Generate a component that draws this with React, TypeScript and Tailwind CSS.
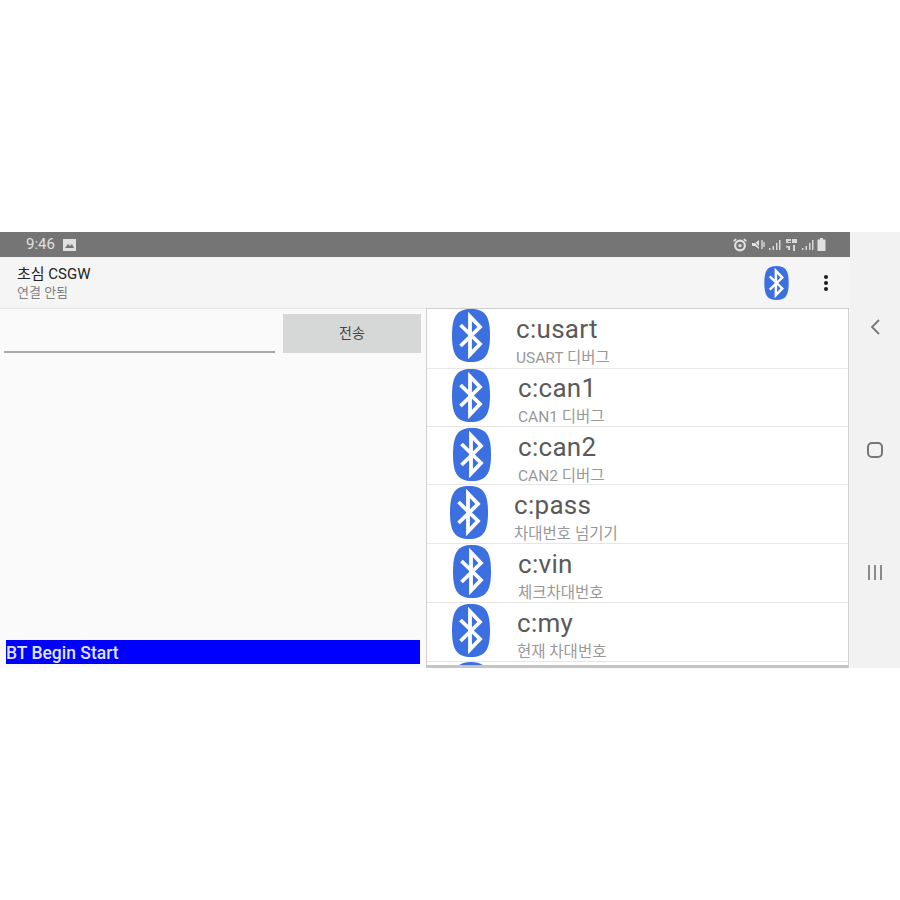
import React from 'react';

const sans = '"Roboto", "Noto Sans CJK KR", sans-serif';

const BtIcon = ({ className }: { className: string }) => (
  <svg viewBox="0 0 38 53" className={className}>
    <path d="M19 0C33 0 38 7 38 26.500C38 46 33 53 19 53C5 53 0 46 0 26.500C0 7 5 0 19 0Z" fill="#3c6fe0" />
    <path
      d="M8.500 16L28 35L18 45.500V7.500L28 18L8.500 37"
      fill="none"
      stroke="#fff"
      strokeWidth="3.800"
      strokeLinejoin="miter"
    />
  </svg>
);

const Signal = () => (
  <svg viewBox="0 0 13 12" className="w-[13px] h-[12px]">
    <path d="M1 9h1.500v2H1zM4.500 7H6v4H4.500zM8 4h1.500v7H8zM11 1h1.500v10H11z" fill="#d8d8d8" />
  </svg>
);

const StatusIcons = () => (
  <div className="flex items-center gap-[3px]">
    <svg viewBox="0 0 14 13" className="w-[16px] h-[14px]">
      <circle cx="7" cy="7" r="4.500" fill="none" stroke="#e0e0e0" strokeWidth="2" />
      <path d="M1 3l2.500-2M13 3l-2.500-2" stroke="#e0e0e0" strokeWidth="1.500" />
      <circle cx="7" cy="7" r="1.500" fill="#e0e0e0" />
    </svg>
    <svg viewBox="0 0 14 13" className="w-[14px] h-[13px]">
      <path d="M1 5h3l4-3v9L4 8H1z" fill="#e0e0e0" />
      <path d="M2 2l8 9" stroke="#757575" strokeWidth="1" />
      <path d="M11 2v9M13 4v5" stroke="#e0e0e0" strokeWidth="1.300" />
    </svg>
    <Signal />
    <svg viewBox="0 0 13 13" className="w-[13px] h-[13px] ml-[1px]">
      <path d="M1 1h5v2H3v1h3v1H1zM7 1h5v4H7zM1 8h4v4H3V9.500H1zM8 7h2v6H8z" fill="#d8d8d8" />
    </svg>
    <Signal />
    <svg viewBox="0 0 9 13" className="w-[9px] h-[13px]">
      <path d="M3 0h3v1.500h2.500V13H.5V1.500H3z" fill="#e0e0e0" />
    </svg>
  </div>
);

const items = [
  { name: 'c:usart', sub: 'USART 디버그', row: 'h-[60px] pl-[25px] gap-[26px]', text: 'mt-[5px]' },
  { name: 'c:can1', sub: 'CAN1 디버그', row: 'h-[58px] pl-[25px] gap-[28px]', text: 'mt-[4px]' },
  { name: 'c:can2', sub: 'CAN2 디버그', row: 'h-[58px] pl-[26px] gap-[27px] pt-[1px]', text: 'mt-[4px]' },
  { name: 'c:pass', sub: '차대번호 넘기기', row: 'h-[59px] pl-[23px] gap-[26px] pt-[1px]', text: 'mt-[4px]' },
  { name: 'c:vin', sub: '체크차대번호', row: 'h-[59px] pl-[26px] gap-[27px] pt-[1px]', text: 'mt-[4px]' },
  { name: 'c:my', sub: '현재 차대번호', row: 'h-[59px] pl-[25px] gap-[27px] pt-[1px]', text: 'mt-[4px]' },
];

const MenuRow = ({ name, sub, row, text }: (typeof items)[number]) => (
  <div className={`${row} shrink-0 flex items-start border-b border-[#e6e6e6] bg-white`}>
    <BtIcon className="w-[38px] h-[53px] shrink-0" />
    <div className={`${text} flex flex-col`}>
      <span className="text-[26px] leading-[30px] tracking-[0.3px] text-[#5a5a5a]">{name}</span>
      <span className="text-[15.500px] leading-[20px] mt-[4px] text-[#989898]">{sub}</span>
    </div>
  </div>
);

export default function App() {
  return (
    <div className="w-[900px] h-[900px] bg-white pt-[232px]" style={{ fontFamily: sans }}>
      <div className="flex h-[436px]">
        <div className="relative w-[850px] flex flex-col">
          <div className="h-[25px] shrink-0 bg-[#757575] flex items-center justify-between pl-[26px] pr-[24px]">
            <div className="flex items-center gap-[8px]">
              <span className="text-[15px] text-[#e0e0e0]">9:46</span>
              <svg viewBox="0 0 13 12" className="w-[13px] h-[12px]">
                <path d="M0 0h13v12H0z" fill="#e0e0e0" />
                <path d="M2 9l3-4 2 2 2-2 2 4z" fill="#757575" />
              </svg>
            </div>
            <StatusIcons />
          </div>

          <div className="h-[52px] shrink-0 bg-[#f5f5f5] border-b border-[#e4e4e4] flex items-center pl-[17px] pr-[22px]">
            <div className="flex flex-col flex-1 pt-[1px]">
              <span className="text-[15px] leading-[18px] text-[#222222]">초심 CSGW</span>
              <span className="text-[13px] leading-[16px] mt-[2px] text-[#808080]">연결 안됨</span>
            </div>
            <BtIcon className="w-[25px] h-[34px] mr-[35px]" />
            <div className="flex flex-col gap-[2px]">
              <span className="w-[4px] h-[4px] rounded-full bg-[#1c1c1c]" />
              <span className="w-[4px] h-[4px] rounded-full bg-[#1c1c1c]" />
              <span className="w-[4px] h-[4px] rounded-full bg-[#1c1c1c]" />
            </div>
          </div>

          <div className="flex-1 bg-[#fafafa] flex flex-col pl-[4px] pt-[5px] pb-[4px]">
            <div className="flex gap-[8px] w-[417px]">
              <div className="w-[271px] h-[39px] border-b-2 border-[#a8a8a8]" />
              <div className="w-[138px] h-[39px] bg-[#d6d7d7] flex items-center justify-center text-[14px] text-[#444444]">
                전송
              </div>
            </div>
            <div className="mt-auto w-[414px] h-[24px] ml-[2px] bg-[#0000ff] text-[#dfe3ff] text-[17.500px] leading-[27px] font-medium">
              BT Begin Start
            </div>
          </div>

          <div className="absolute left-[426px] top-[76px] w-[423px] h-[360px] bg-white border border-[#cfcfcf] border-b-[3px] border-b-[#c4c4c4] overflow-hidden flex flex-col">
            {items.map((item) => (
              <MenuRow key={item.name} {...item} />
            ))}
            <div className="pl-[25px] shrink-0">
              <BtIcon className="w-[38px] h-[53px]" />
            </div>
          </div>
        </div>

        <div className="w-[50px] bg-[#f2f2f2] flex flex-col items-center pt-[86px]">
          <svg viewBox="0 0 12 18" className="w-[12px] h-[18px]">
            <path d="M10 2L3 9l7 7" fill="none" stroke="#777777" strokeWidth="1.800" />
          </svg>
          <div className="w-[16px] h-[16px] mt-[106px] rounded-[5px] border-2 border-[#777777]" />
          <div className="flex gap-[4px] mt-[107px]">
            <span className="w-[2px] h-[15px] bg-[#8a8a8a]" />
            <span className="w-[2px] h-[15px] bg-[#8a8a8a]" />
            <span className="w-[2px] h-[15px] bg-[#8a8a8a]" />
          </div>
        </div>
      </div>
    </div>
  );
}
